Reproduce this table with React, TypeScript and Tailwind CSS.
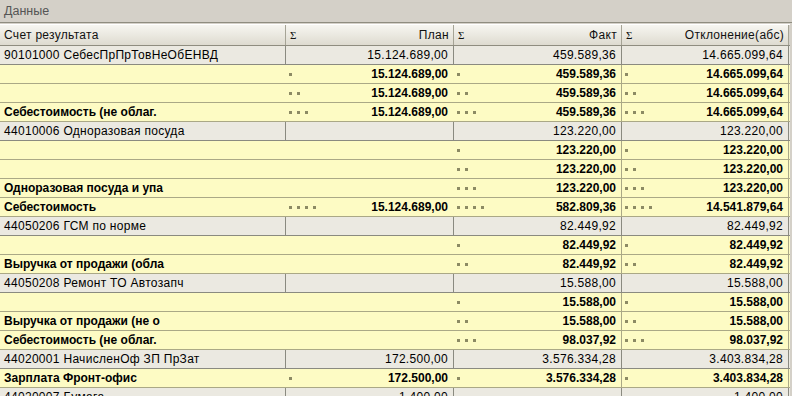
type Cell = { dots?: number; value?: string }
type Row = { kind: "g" | "y"; label: string; cells: Cell[] }

const v3 = (d: number, a: string, b: string, c: string): Cell[] => [
	{ dots: d, value: a },
	{ dots: d, value: b },
	{ dots: d, value: c },
]
const v2 = (d: number, b: string, c: string): Cell[] => [{}, { dots: d, value: b }, { dots: d, value: c }]

const rows: Row[] = [
	{ kind: "g", label: "90101000 СебесПрПрТовНеОбЕНВД", cells: v3(0, "15.124.689,00", "459.589,36", "14.665.099,64") },
	{ kind: "y", label: "", cells: v3(1, "15.124.689,00", "459.589,36", "14.665.099,64") },
	{ kind: "y", label: "", cells: v3(2, "15.124.689,00", "459.589,36", "14.665.099,64") },
	{ kind: "y", label: "Себестоимость (не облаг.", cells: v3(3, "15.124.689,00", "459.589,36", "14.665.099,64") },
	{ kind: "g", label: "44010006 Одноразовая посуда", cells: v2(0, "123.220,00", "123.220,00") },
	{ kind: "y", label: "", cells: v2(1, "123.220,00", "123.220,00") },
	{ kind: "y", label: "", cells: v2(2, "123.220,00", "123.220,00") },
	{ kind: "y", label: "Одноразовая посуда и упа", cells: v2(3, "123.220,00", "123.220,00") },
	{ kind: "y", label: "Себестоимость", cells: v3(4, "15.124.689,00", "582.809,36", "14.541.879,64") },
	{ kind: "g", label: "44050206 ГСМ по норме", cells: v2(0, "82.449,92", "82.449,92") },
	{ kind: "y", label: "", cells: v2(1, "82.449,92", "82.449,92") },
	{ kind: "y", label: "Выручка от продажи (обла", cells: v2(2, "82.449,92", "82.449,92") },
	{ kind: "g", label: "44050208 Ремонт ТО Автозапч", cells: v2(0, "15.588,00", "15.588,00") },
	{ kind: "y", label: "", cells: v2(1, "15.588,00", "15.588,00") },
	{ kind: "y", label: "Выручка от продажи (не о", cells: v2(2, "15.588,00", "15.588,00") },
	{ kind: "y", label: "Себестоимость (не облаг.", cells: v2(3, "98.037,92", "98.037,92") },
	{ kind: "g", label: "44020001 НачисленОф ЗП  ПрЗат", cells: v3(0, "172.500,00", "3.576.334,28", "3.403.834,28") },
	{ kind: "y", label: "Зарплата Фронт-офис", cells: v3(1, "172.500,00", "3.576.334,28", "3.403.834,28") },
	{ kind: "g", label: "44020007 Бумага", cells: [{ value: "1.400,00" }, {}, { value: "1.400,00" }] },
]

const widths = ["w-[168px]", "w-[168px]", "w-[167px]"]

function Dots({ n }: { n: number }) {
	return (
		<div className="flex gap-[5px] pl-[3px]">
			{Array.from({ length: n }).map((_, i) => (
				<span key={i} className="w-[3px] h-[3px] bg-[#8c8a64]" />
			))}
		</div>
	)
}

function Header() {
	const cols = ["План", "Факт", "Отклонение(абс)"]
	return (
		<div className="flex h-[21px] border-b border-[#8f8d80] tracking-[0.3px]">
			<div className="w-[286px] h-full flex items-center px-[4px] bg-gradient-to-b from-[#f7f6f1] to-[#dedbd0] border-r border-[#a6a496] text-[#111]">
				Счет результата
			</div>
			{cols.map((c, i) => (
				<div
					key={c}
					className={`${widths[i]} h-full flex items-center justify-between px-[4px] bg-gradient-to-b from-[#f7f6f1] to-[#dedbd0] border-r border-[#a6a496] text-[#111]`}
				>
					<span className="text-[11px] font-['Liberation_Serif',serif]">Σ</span>
					<span>{c}</span>
				</div>
			))}
		</div>
	)
}

function DataRow({ row }: { row: Row }) {
	const g = row.kind === "g"
	return (
		<div
			className={`flex h-[19px] border-b ${
				g ? "bg-[#ebe9e1] border-[#8a8a80] tracking-[0.3px]" : "bg-[#fdfbc4] border-[#aaa886] font-bold"
			}`}
		>
			<div
				className={`w-[286px] h-full flex items-center px-[4px] whitespace-nowrap overflow-hidden ${
					g ? "border-r border-[#8a8a80]" : ""
				}`}
			>
				{row.label}
			</div>
			{row.cells.map((c, i) => (
				<div
					key={i}
					className={`${widths[i]} h-full flex items-center justify-between pr-[5px] border-r ${
						g ? "border-[#8a8a80]" : i === 0 ? "border-transparent" : "border-[#aaa886]"
					}`}
				>
					<Dots n={c.dots ?? 0} />
					<span>{c.value}</span>
				</div>
			))}
		</div>
	)
}

export default function App() {
	return (
		<div className="w-[792px] h-[396px] overflow-hidden bg-[#d4d0c8] font-['Liberation_Sans',Arial,sans-serif] text-[12px] text-black">
			<div className="h-[23px] flex items-center px-[4px] text-[#555] text-[12.5px] border-b border-[#8f8d80]">Данные</div>
			<div className="mt-[1px] w-[790px] border-t border-[#fff]">
				<Header />
				{rows.map((r, i) => (
					<DataRow key={i} row={r} />
				))}
			</div>
		</div>
	)
}
